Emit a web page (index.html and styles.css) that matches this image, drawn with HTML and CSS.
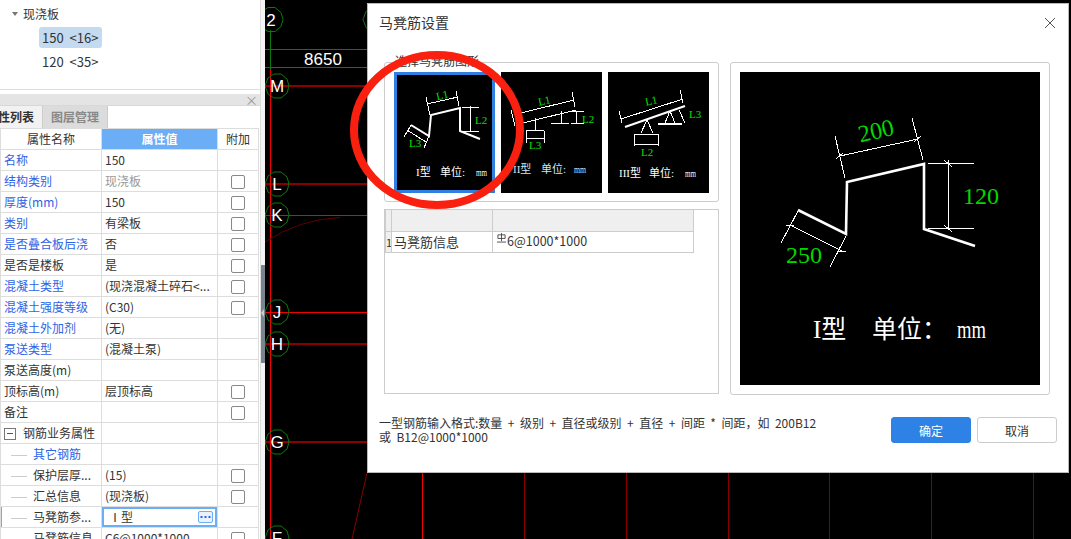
FILE: index.html
```html
<!DOCTYPE html>
<html lang="zh-CN">
  <head>
    <meta charset="UTF-8" />
    <title>马凳筋设置</title>
    <link rel="stylesheet" href="styles.css">
  </head>
  <body>
    <div class="side">
      <div class="tree">
        <div class="tree-root"><span class="caret"></span>现浇板</div>
        <div class="tree-item selected">150 &lt;16&gt;</div>
        <div class="tree-item">120 &lt;35&gt;</div>
      </div>
      <div class="panel-head"><span class="panel-close">×</span></div>
      <div class="tabs">
        <div class="tab active"><span>属性列表</span></div>
        <div class="tab">图层管理</div>
      </div>
      <table class="props">
        <colgroup><col class="c1"><col class="c2"><col class="c3"></colgroup>
        <tr class="head"><th>属性名称</th><th class="on">属性值</th><th>附加</th></tr>
        <tr><td class="link">名称</td><td>150</td><td></td></tr>
        <tr><td class="link">结构类别</td><td class="muted">现浇板</td><td><i class="check"></i></td></tr>
        <tr><td class="link">厚度(mm)</td><td>150</td><td><i class="check"></i></td></tr>
        <tr><td class="link">类别</td><td>有梁板</td><td><i class="check"></i></td></tr>
        <tr><td class="link">是否叠合板后浇</td><td>否</td><td><i class="check"></i></td></tr>
        <tr><td>是否是楼板</td><td>是</td><td><i class="check"></i></td></tr>
        <tr><td class="link">混凝土类型</td><td>(现浇混凝土碎石&lt;...</td><td><i class="check"></i></td></tr>
        <tr><td class="link">混凝土强度等级</td><td>(C30)</td><td><i class="check"></i></td></tr>
        <tr><td class="link">混凝土外加剂</td><td>(无)</td><td></td></tr>
        <tr><td class="link">泵送类型</td><td>(混凝土泵)</td><td></td></tr>
        <tr><td>泵送高度(m)</td><td></td><td></td></tr>
        <tr><td>顶标高(m)</td><td>层顶标高</td><td><i class="check"></i></td></tr>
        <tr><td>备注</td><td></td><td><i class="check"></i></td></tr>
        <tr><td class="group"><i class="minus"></i>钢筋业务属性</td><td></td><td></td></tr>
        <tr><td class="sub link"><i class="dash"></i>其它钢筋</td><td></td><td></td></tr>
        <tr><td class="sub"><i class="dash"></i>保护层厚...</td><td>(15)</td><td><i class="check"></i></td></tr>
        <tr><td class="sub"><i class="dash"></i>汇总信息</td><td>(现浇板)</td><td><i class="check"></i></td></tr>
        <tr class="current"><td class="sub"><i class="dash"></i>马凳筋参...</td><td class="editing"><div class="editor"><span>Ⅰ型</span><b class="dots"></b></div></td><td></td></tr>
        <tr><td class="sub"><i class="dash"></i>马凳筋信息</td><td>C6@1000*1000</td><td><i class="check"></i></td></tr>
      </table>
    </div>
    <div class="splitter"><div class="handle"><span class="handle-arrow"></span></div></div>

    <div class="cad">
      <svg class="cad-svg" viewBox="265 0 806 539">
        <defs>
          <polygon id="bubble" points="-12,0 -9,-8 -3,-12 4,-12 10,-7 12,0 10,7 4,12 -3,12 -9,8" fill="none" stroke="#0a7a0a" stroke-width="1"/>
        </defs>
        <g stroke="#0a7a0a" stroke-width="1">
          <line x1="265" y1="49.5" x2="367" y2="49.5"/>
          <line x1="265" y1="67.5" x2="367" y2="67.5"/>
          <line x1="270.5" y1="30" x2="270.5" y2="75"/>
        </g>
        <g stroke="#8a0000" stroke-width="2">
          <line x1="265" y1="86" x2="367" y2="86"/>
          <line x1="265" y1="184" x2="367" y2="184"/>
          <line x1="265" y1="344" x2="367" y2="344"/>
          <line x1="265" y1="442" x2="367" y2="442"/>
        </g>
        <g stroke="#f00000" stroke-width="1">
          <line x1="265" y1="215.5" x2="367" y2="215.5"/>
          <line x1="265" y1="312.5" x2="367" y2="312.5"/>
          <line x1="270.5" y1="70" x2="270.5" y2="539"/>
          <line x1="422.5" y1="470" x2="422.5" y2="539"/>
        </g>
        <path d="M265 242 Q300 219 340 217.5" fill="none" stroke="#5a0000" stroke-width="1"/>
        <g stroke="#8a0000" stroke-width="1">
          <line x1="367" y1="473" x2="352" y2="539"/>
          <line x1="524.5" y1="470" x2="524.5" y2="539"/>
          <line x1="626.5" y1="470" x2="626.5" y2="539"/>
          <line x1="728.5" y1="470" x2="728.5" y2="539"/>
          <line x1="829.5" y1="470" x2="829.5" y2="539"/>
          <line x1="931.5" y1="470" x2="931.5" y2="539"/>
          <line x1="1033.5" y1="470" x2="1033.5" y2="539"/>
        </g>
        <use href="#bubble" x="271" y="19.5"/>
        <use href="#bubble" x="375" y="19.5"/>
        <use href="#bubble" x="277" y="86"/>
        <use href="#bubble" x="277" y="184"/>
        <use href="#bubble" x="277" y="215"/>
        <use href="#bubble" x="277" y="312"/>
        <use href="#bubble" x="277" y="344"/>
        <use href="#bubble" x="277" y="442"/>
        <use href="#bubble" x="277" y="538"/>
        <g class="axis">
          <text x="271" y="26">2</text>
          <text x="277" y="92">M</text>
          <text x="277" y="190">L</text>
          <text x="277" y="221">K</text>
          <text x="277" y="318">J</text>
          <text x="277" y="350">H</text>
          <text x="277" y="448">G</text>
          <text x="277" y="544">F</text>
          <text x="323" y="65">8650</text>
        </g>
      </svg>
    </div>

    <div class="dialog">
      <div class="dialog-head">
        <span class="dialog-title">马凳筋设置</span>
        <svg class="dialog-x" viewBox="0 0 12 12"><path d="M1 1 L11 11 M11 1 L1 11" stroke="#555" stroke-width="1" fill="none"/></svg>
      </div>
      <div class="dialog-body">
        <div class="col-left">
          <div class="group-box">
            <span class="legend">选择马凳筋图形</span>
            <svg class="thumb picked" viewBox="394 72 101 121">
              <rect x="394" y="72" width="101" height="121" fill="#000"/>
              <polyline class="heavy" points="411,125 429,136 431,115 460,108 460,131 480,139"/>
              <g class="thin">
                <line x1="427" y1="104" x2="458" y2="97"/><line x1="426" y1="97" x2="430" y2="115"/><line x1="456" y1="91" x2="459" y2="106"/>
                <line x1="462" y1="107" x2="479" y2="107"/><line x1="462" y1="131" x2="479" y2="131"/><line x1="470" y1="106" x2="470" y2="132"/>
                <line x1="411" y1="125" x2="404" y2="137"/><line x1="429" y1="136" x2="424" y2="148"/><line x1="407" y1="130" x2="426" y2="142"/>
              </g>
              <text class="dim" x="436" y="99" transform="rotate(-12 442 95)">L1</text>
              <text class="dim" x="475" y="124">L2</text>
              <text class="dim" x="409" y="147">L3</text>
              <text class="cap" x="416" y="176">I型<tspan x="440">单位:</tspan></text>
              <text class="cap" x="476" y="176" textLength="11" lengthAdjust="spacingAndGlyphs">mm</text>
            </svg>
            <svg class="thumb" viewBox="501 72 101 121">
              <rect x="501" y="72" width="101" height="121" fill="#000"/>
              <g class="thin">
                <line x1="521" y1="113" x2="574" y2="100"/><line x1="511" y1="110" x2="515" y2="126"/><line x1="572" y1="92" x2="575" y2="107"/>
                <line x1="523" y1="123" x2="576" y2="110"/>
                <line x1="535" y1="118" x2="535" y2="130"/><line x1="526" y1="130" x2="544" y2="130"/><line x1="526" y1="138" x2="544" y2="138"/>
                <line x1="526" y1="131" x2="526" y2="143"/><line x1="544" y1="131" x2="544" y2="143"/>
                <line x1="561" y1="111" x2="561" y2="123"/><line x1="551" y1="123" x2="569" y2="123"/>
                <line x1="576" y1="111" x2="576" y2="123"/><line x1="571" y1="111" x2="584" y2="111"/><line x1="571" y1="123" x2="584" y2="123"/>
              </g>
              <text class="dim" x="538" y="105" transform="rotate(-12 542 101)">L1</text>
              <text class="dim" x="582" y="123">L2</text>
              <text class="dim" x="529" y="149">L3</text>
              <text class="cap blue" x="513" y="173">II型<tspan x="541">单位:</tspan></text>
              <text class="cap blue" x="574" y="173" textLength="12" lengthAdjust="spacingAndGlyphs">mm</text>
            </svg>
            <svg class="thumb" viewBox="608 72 101 121">
              <rect x="608" y="72" width="101" height="121" fill="#000"/>
              <line class="heavy" x1="625" y1="127" x2="685" y2="106"/>
              <g class="thin">
                <line x1="621" y1="119" x2="683" y2="99"/><line x1="619" y1="111" x2="622" y2="123"/><line x1="680" y1="90" x2="683" y2="103"/>
                <line x1="647" y1="120" x2="641" y2="133"/><line x1="647" y1="120" x2="653" y2="133"/><line x1="634" y1="134" x2="658" y2="134"/>
                <line x1="634" y1="134" x2="634" y2="146"/><line x1="658" y1="134" x2="658" y2="146"/><line x1="634" y1="144" x2="658" y2="144"/>
                <line x1="670" y1="111" x2="665" y2="123"/><line x1="670" y1="111" x2="675" y2="123"/>
                <line x1="679" y1="110" x2="685" y2="123"/>
              </g>
              <line class="mid" x1="658" y1="124" x2="682" y2="124"/>
              <text class="dim" x="645" y="105" transform="rotate(-12 649 101)">L1</text>
              <text class="dim" x="641" y="156">L2</text>
              <text class="dim" x="689" y="118">L3</text>
              <text class="cap" x="619" y="177">III型<tspan x="649">单位:</tspan></text>
              <text class="cap" x="685" y="177" textLength="11" lengthAdjust="spacingAndGlyphs">mm</text>
            </svg>
          </div>
          <div class="grid-box">
            <table class="info">
              <colgroup><col class="n"><col class="k"><col class="v"></colgroup>
              <tr class="info-head"><td></td><td></td><td></td></tr>
              <tr>
                <td class="num">1</td>
                <td>马凳筋信息</td>
                <td class="val"><svg class="grade" viewBox="0 0 10 11"><path d="M1 2 H9 V6 H1 Z M5 0 V9 M0 10 H10" fill="none" stroke="#444" stroke-width="1"/></svg>6@1000*1000</td>
              </tr>
            </table>
          </div>
        </div>
        <div class="preview">
          <svg class="preview-svg" viewBox="740 72 300 313">
            <rect x="740" y="72" width="300" height="313" fill="#000"/>
            <polyline class="heavy big" points="798,210 846,234 847,182 924,164 924,229 975,246"/>
            <g class="thin">
              <line x1="840" y1="156" x2="918" y2="139"/><line x1="835" y1="136" x2="845" y2="178"/><line x1="912" y1="118" x2="923" y2="160"/>
              <line x1="836" y1="159" x2="843" y2="153"/><line x1="914" y1="142" x2="921" y2="136"/>
              <line x1="928" y1="163.5" x2="974" y2="163.5"/><line x1="928" y1="228.5" x2="974" y2="228.5"/><line x1="948.5" y1="160" x2="948.5" y2="230"/>
              <line x1="944" y1="160" x2="952" y2="167"/><line x1="944" y1="225" x2="952" y2="232"/>
              <line x1="798" y1="211" x2="781" y2="243"/><line x1="846" y1="236" x2="830" y2="267"/><line x1="790" y1="225" x2="842" y2="251"/>
              <line x1="786" y1="225" x2="794" y2="225"/><line x1="838" y1="251" x2="846" y2="251"/>
            </g>
            <text class="dim-big" x="858" y="139" transform="rotate(-13 875 131)">200</text>
            <text class="dim-big" x="963" y="204">120</text>
            <text class="dim-big" x="786" y="263">250</text>
            <text class="cap-big" x="813" y="338">I型<tspan x="872">单位：</tspan></text>
            <text class="cap-big" x="957" y="338" textLength="29" lengthAdjust="spacingAndGlyphs">mm</text>
          </svg>
        </div>
      </div>
      <div class="dialog-foot">
        <p class="hint">一型钢筋输入格式:数量 + 级别 + 直径或级别 + 直径 + 间距 * 间距，如 200B12<br>或 B12@1000*1000</p>
        <div class="buttons">
          <button class="btn primary">确定</button>
          <button class="btn">取消</button>
        </div>
      </div>
    </div>

    <svg class="ring" viewBox="0 0 190 175">
      <ellipse cx="95" cy="87" rx="83" ry="75" fill="none" stroke="#fa2010" stroke-width="8"/>
    </svg>
  </body>
</html>
```

FILE: styles.css
```css
html, body {
  margin: 0;
  height: 100%;
}

body {
  width: 1071px;
  height: 539px;
  overflow: hidden;
  display: flex;
  background: #000;
  font-family: "Noto Sans CJK SC", "Liberation Sans", sans-serif;
  font-size: 12px;
  color: #333;
}

/* left panel */
.side {
  width: 260px;
  flex: none;
  height: 539px;
  overflow: hidden;
  background: #fff;
  border-right: 1px solid #ddd;
}

.tree {
  height: 89px;
  border-bottom: 1px solid #ddd;
  padding-left: 12px;
}

.tree-root {
  height: 27px;
  line-height: 27px;
  font-size: 12px;
  display: flex;
  align-items: center;
}

.caret {
  width: 0;
  height: 0;
  border: 3px solid transparent;
  border-top: 4px solid #777;
  border-bottom: 0;
  margin-right: 5px;
}

.tree-item {
  width: 63px;
  height: 21px;
  line-height: 21px;
  margin: 0 0 3px 27px;
  padding-left: 3px;
  font-size: 13px;
  word-spacing: 3px;
  box-sizing: border-box;
  border-radius: 3px;
  white-space: nowrap;
}

.tree-item.selected {
  background: #c4daf0;
}

.panel-head {
  height: 11px;
  margin-top: 4px;
  background: #e4e4e4;
  border-bottom: 1px solid #d8d8d8;
}

.panel-close {
  display: block;
  text-align: right;
  padding-right: 2px;
  line-height: 11px;
  font-size: 13px;
  color: #999;
}

.tabs {
  display: flex;
  height: 22px;
}

.tab {
  width: 64px;
  line-height: 22px;
  font-size: 12px;
  font-weight: bold;
  text-align: center;
  color: #888;
  background: #dcdcdc;
  border-right: 1px solid #ccc;
}

.tab.active {
  width: 43px;
  padding-right: 8px;
  box-sizing: border-box;
  background: #f2f2f2;
  color: #333;
  border-right: 1px solid #ccc;
  display: flex;
  justify-content: flex-end;
  overflow: hidden;
  white-space: nowrap;
}

.props {
  width: 258px;
  table-layout: fixed;
  border-collapse: collapse;
  border: 1px solid #ddd;
}

.props .c1 { width: 101px; }
.props .c2 { width: 116px; }
.props .c3 { width: 41px; }

.props tr {
  height: 21px;
}

.props th, .props td {
  border: 1px solid #ddd;
  padding: 0 3px;
  height: 20px;
  font-size: 12px;
  font-weight: normal;
  line-height: 20px;
  white-space: nowrap;
  overflow: hidden;
  text-align: left;
}

.props td:last-child, .props th {
  text-align: center;
}

.props th.on {
  background: #6caef5;
  color: #fff;
  font-weight: bold;
}

.props .link {
  color: #2e62e6;
}

.props .muted {
  color: #999;
}

.check {
  display: inline-block;
  vertical-align: middle;
  width: 12px;
  height: 12px;
  border: 1px solid #888;
  border-radius: 2px;
  margin-top: -1px;
}

.props .group {
  padding-left: 3px;
}

.minus {
  display: inline-block;
  vertical-align: middle;
  width: 10px;
  height: 10px;
  border: 1px solid #777;
  margin-right: 7px;
  margin-top: -2px;
  background: linear-gradient(#555, #555) center / 6px 1px no-repeat;
}

.dash {
  display: inline-block;
  vertical-align: middle;
  width: 16px;
  height: 1px;
  background: #ccc;
  margin: 0 6px 0 7px;
}

.props .sub {
  padding-left: 3px;
}

.current td:first-child {
  box-shadow: inset 1px 0 0 #6caef5;
}

.props td.editing {
  padding: 0;
}

.editor {
  height: 20px;
  box-sizing: border-box;
  border: 2px solid #6caef5;
  line-height: 16px;
  padding-left: 5px;
  display: flex;
  justify-content: space-between;
  align-items: center;
}

.dots {
  width: 15px;
  height: 12px;
  border: 1px solid #6caef5;
  border-radius: 2px;
  background: radial-gradient(circle, #2e62e6 1px, transparent 1.3px) 0.5px center / 4px 4px repeat-x, #e8f1fc;
  margin-right: 2px;
  box-sizing: border-box;
}

.splitter {
  width: 4px;
  flex: none;
  background: #f4f4f4;
  padding-top: 265px;
}

.handle {
  height: 98px;
  background: #7a848e;
  position: relative;
}

.handle-arrow {
  position: absolute;
  top: 44px;
  left: 0;
  border: 4px solid transparent;
  border-right: 3px solid #ccc;
  border-left: 0;
}

/* drawing area */
.cad {
  flex: 1;
  background: #000;
  height: 539px;
  overflow: hidden;
}

.cad-svg {
  display: block;
  width: 806px;
  height: 539px;
}

.axis text {
  fill: #fff;
  font-family: "Liberation Sans", sans-serif;
  font-size: 17px;
  text-anchor: middle;
}

/* dialog */
.dialog {
  position: absolute;
  left: 367px;
  top: 3px;
  width: 702px;
  height: 470px;
  box-sizing: border-box;
  background: #fff;
  border: 1px solid #bbb;
  display: flex;
  flex-direction: column;
}

.dialog-head {
  height: 58px;
  flex: none;
  display: flex;
  justify-content: space-between;
  padding: 8px 12px 0 11px;
  box-sizing: border-box;
}

.dialog-title {
  font-size: 14px;
  line-height: 20px;
  color: #333;
}

.dialog-x {
  width: 12px;
  height: 12px;
  margin: 5px 0 0;
}

.dialog-body {
  display: flex;
  gap: 11px;
  padding-left: 16px;
  height: 333px;
  flex: none;
}

.col-left {
  width: 335px;
  display: flex;
  flex-direction: column;
  gap: 7px;
}

.group-box {
  height: 140px;
  box-sizing: border-box;
  border: 1px solid #ccc;
  border-radius: 3px;
  padding: 9px 0 0 9px;
  display: flex;
  gap: 6px;
  position: relative;
}

.legend {
  position: absolute;
  top: -10px;
  left: 9px;
  padding: 0 1px;
  background: #fff;
  font-size: 12px;
  line-height: 16px;
  color: #333;
}

.thumb {
  display: block;
  width: 101px;
  height: 121px;
  box-sizing: border-box;
}

.thumb.picked {
  outline: 3px solid #2e7fe0;
  outline-offset: -3px;
}

.heavy {
  fill: none;
  stroke: #fff;
  stroke-width: 2;
}

.heavy.big {
  stroke-width: 2.6;
}

.mid {
  stroke: #fff;
  stroke-width: 2;
}

.thin line {
  stroke: #fff;
  stroke-width: 1;
  shape-rendering: crispEdges;
}

.dim {
  fill: #00e000;
  font-family: "Liberation Serif", serif;
  font-size: 11px;
}

.cap {
  fill: #fff;
  font-family: "Liberation Serif", "Noto Sans CJK SC", serif;
  font-size: 11px;
}

.cap.blue {
  fill: #cfe6ff;
}

.dim-big {
  fill: #00d800;
  font-family: "Liberation Serif", serif;
  font-size: 24px;
}

.cap-big {
  fill: #fff;
  font-family: "Liberation Serif", "Noto Sans CJK SC", serif;
  font-size: 25px;
}

.grid-box {
  height: 185px;
  box-sizing: border-box;
  border: 1px solid #ccc;
}

.info {
  width: 308px;
  table-layout: fixed;
  border-collapse: collapse;
}

.info .n { width: 6px; }
.info .k { width: 101px; }
.info .v { width: 201px; }

.info td {
  height: 20px;
  padding: 0 0 0 2px;
  border: 1px solid #ccc;
  border-top: 0;
  font-size: 13px;
  line-height: 20px;
  white-space: nowrap;
  overflow: hidden;
}

.info-head td {
  background: #efefef;
  height: 21px;
}

.info td.num {
  background: #efefef;
  padding: 0;
  font-size: 11px;
  text-align: center;
}

.info td.val {
  padding-left: 4px;
  font-size: 12.5px;
  line-height: 18px;
  vertical-align: top;
}

.grade {
  width: 9px;
  height: 10px;
  vertical-align: 3px;
  margin-right: 1px;
}

.preview {
  width: 320px;
  height: 333px;
  box-sizing: border-box;
  padding: 9px;
  border: 1px solid #ccc;
  border-radius: 3px;
}

.preview-svg {
  display: block;
  width: 300px;
  height: 313px;
}

.dialog-foot {
  display: flex;
  justify-content: space-between;
  padding: 21px 11px 0 11px;
}

.hint {
  margin: 0;
  font-size: 12px;
  word-spacing: 2.8px;
  line-height: 14px;
  color: #333;
  width: 470px;
}

.buttons {
  display: flex;
  gap: 6px;
  margin-top: 1px;
}

.btn {
  width: 80px;
  height: 26px;
  padding: 0;
  border: 1px solid #ccc;
  border-radius: 3px;
  background: #fff;
  color: #333;
  font-family: inherit;
  font-size: 12px;
}

.btn.primary {
  background: #2e82e6;
  border-color: #2e82e6;
  color: #fff;
}

/* red mark drawn over the dialog */
.ring {
  position: absolute;
  left: 342px;
  top: 43px;
  width: 190px;
  height: 175px;
}
```
